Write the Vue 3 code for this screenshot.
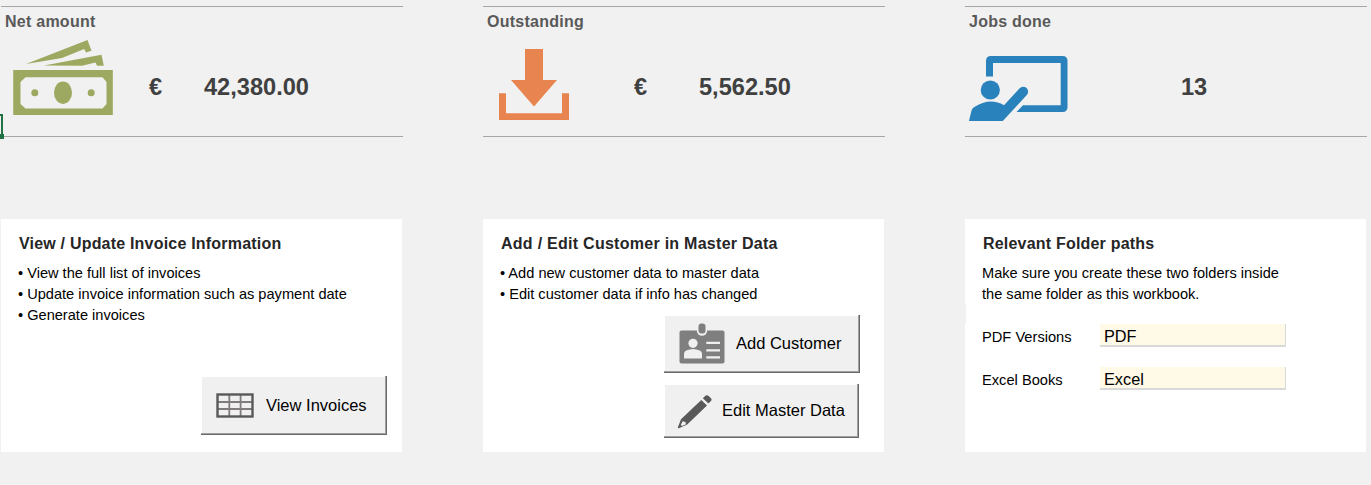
<script setup>
const columns = [
  { id: 'net', label: 'Net amount', currency: '€', value: '42,380.00' },
  { id: 'due', label: 'Outstanding', currency: '€', value: '5,562.50' },
  { id: 'jobs', label: 'Jobs done', currency: '', value: '13' },
]
const folders = [
  { label: 'PDF Versions', value: 'PDF' },
  { label: 'Excel Books', value: 'Excel' },
]
</script>

<template>
  <main class="sheet">
    <span class="cell-cursor"></span>
    <section class="row kpis">
      <article v-for="c in columns" :key="c.id" class="kpi" :class="c.id">
        <h2>{{ c.label }}</h2>
        <div class="figure">
          <svg v-if="c.id === 'net'" class="pic" width="120" height="96" viewBox="0 0 120 96">
            <g fill="#9da960">
              <path d="M25 33 L86.5 9 L90.5 19.7 L85 21.5 L83.2 18 L61 27 Z" />
              <path d="M43 34.5 L100.5 23.7 L102.8 34.8 H96 L94.5 31.5 L81 34.8 Z" />
              <path fill-rule="evenodd" d="M12.2 39 H111.8 V84 H12.2 Z M24.5 46.2 L19.5 51 V73 L24.5 77.6 H101.5 L105.5 73 V51 L101.5 46.2 Z" />
              <ellipse cx="62" cy="61.7" rx="9" ry="11.2" />
              <circle cx="33.8" cy="61.8" r="3.5" />
              <circle cx="90.2" cy="61.8" r="3.5" />
            </g>
          </svg>
          <svg v-else-if="c.id === 'due'" class="pic" width="120" height="96" viewBox="0 0 120 96">
            <g fill="#e8844f">
              <path d="M42 18 H60 V49 H74 L51 75.5 L28 49 H42 Z" />
              <path d="M16 62.3 H23 V82.3 H79 V62.3 H86 V89 H16 Z" />
            </g>
          </svg>
          <svg v-else class="pic" width="120" height="96" viewBox="0 0 120 96">
            <g fill="#2982bb">
              <path d="M21 45.5 V30 Q21 25 26 25 H97.5 Q102.5 25 102.5 30 V76 Q102.5 81 97.5 81 H51.5 L58 74.2 H95.7 V32 H28 V45.5 Z" />
              <circle cx="25.3" cy="59" r="9.6" />
              <path d="M4 90 L6.5 79.5 Q7 77.5 9 76.2 Q25 66 39 74.3 L54.6 57.3 A4.8 4.8 0 0 1 61.8 64 L37.8 90 Z" />
            </g>
          </svg>
          <span class="currency">{{ c.currency }}</span>
          <span class="value">{{ c.value }}</span>
        </div>
      </article>
    </section>

    <section class="row cards">
      <article class="card">
        <h3>View / Update Invoice Information</h3>
        <p>• View the full list of invoices</p>
        <p>• Update invoice information such as payment date</p>
        <p>• Generate invoices</p>
        <button class="view">
          <svg width="38" height="25" viewBox="0 0 38 25">
            <path fill="none" stroke="#807c7e" stroke-width="1.8" d="M2 9 H36 M2 16 H36 M13.3 2 V23 M24.6 2 V23" />
            <rect x="1.5" y="1.5" width="35" height="22" fill="none" stroke="#595959" stroke-width="2.4" />
          </svg>
          <span>View Invoices</span>
        </button>
      </article>

      <article class="card customers">
        <h3>Add / Edit Customer in Master Data</h3>
        <p>• Add new customer data to master data</p>
        <p>• Edit customer data if info has changed</p>
        <button class="add">
          <svg width="46" height="41" viewBox="0 0 46 41">
            <rect x=".5" y="7.5" width="45" height="33" rx="2" fill="#7f7f7f" />
            <path fill="#f0f0f0" d="M17.8 6 H28.2 V7.5 A5.2 5.2 0 0 1 17.8 7.5 Z" />
            <rect x="19.5" y=".5" width="7" height="10" rx="3" fill="#7f7f7f" />
            <g fill="#f0f0f0">
              <circle cx="14" cy="20.3" r="4.6" />
              <path d="M5 35.5 V30.5 Q5 28.8 7.3 27.6 Q14 24.5 20.7 27.6 Q23 28.8 23 30.5 V35.5 Z" />
              <path d="M27.3 18.7 H41 V21 H27.3 Z M27.3 26.2 H41 V28.4 H27.3 Z M27.3 33.2 H41 V35.5 H27.3 Z" />
            </g>
          </svg>
          <span>Add Customer</span>
        </button>
        <button class="edit">
          <svg width="36" height="36" viewBox="0 0 36 36">
            <g fill="#595959">
              <path d="M25.8 5.3 L28.7 2.6 Q30 1.6 31.4 2.8 L34 5.3 Q35.2 6.6 34.2 7.8 L31.4 10.6 Z" />
              <path fill-rule="evenodd" d="M24.3 6.9 L30 12.4 L10.2 31.5 L1.8 35.2 Q.6 35.5 .9 34.3 L4 26.2 Z M5.6 28.3 L3.8 32 L5 33 L8.9 31.3 L8.5 28.9 Z" />
            </g>
          </svg>
          <span>Edit Master Data</span>
        </button>
      </article>

      <article class="card notched">
        <h3>Relevant Folder paths</h3>
        <p>Make sure you create these two folders inside</p>
        <p>the same folder as this workbook.</p>
        <div class="folders">
          <div v-for="f in folders" :key="f.label" class="folder">
            <span class="name">{{ f.label }}</span>
            <span class="path">{{ f.value }}</span>
          </div>
        </div>
      </article>
    </section>
  </main>
</template>

<style>
body {
  background: #f1f1f1;
}
</style>

<style scoped>
.sheet {
  box-sizing: border-box;
  position: relative;
  width: 1371px;
  height: 485px;
  padding: 6px 0 0 1px;
  overflow: hidden;
  background: #f1f1f1;
  font-family: "Liberation Sans", Arial, sans-serif;
}
.cell-cursor {
  position: absolute;
  left: 0;
  top: 114px;
  width: 1px;
  height: 20px;
  border: solid #217346;
  border-width: 2px 2px 0 0;
}
.cell-cursor::after {
  content: "";
  position: absolute;
  left: 0;
  top: 18px;
  width: 4px;
  height: 5px;
  background: #217346;
}
.row {
  display: grid;
  grid-template-columns: repeat(3, 402px);
  column-gap: 80px;
}
.kpi {
  box-sizing: border-box;
  height: 131px;
  border: solid #a6a6a6;
  border-width: 1px 0;
}
.kpi h2 {
  margin: 0;
  padding: 5px 0 0 4px;
  font-size: 16px;
  line-height: 20px;
  letter-spacing: 0.25px;
  color: #595959;
}
.figure {
  display: flex;
  height: 96px;
}
.pic {
  flex: none;
  margin-top: -1px;
}
.currency {
  width: 83px;
  padding-left: 28px;
  box-sizing: border-box;
}
.due .currency {
  width: 96px;
  padding-left: 31px;
}
.jobs .currency {
  width: 96px;
}
.value,
.currency {
  padding-top: 41px;
  font-size: 23.6px;
  line-height: 28px;
  font-weight: bold;
  color: #404040;
}
.cards {
  margin-top: 82px;
}
.card {
  box-sizing: border-box;
  position: relative;
  display: flex;
  flex-direction: column;
  width: 401px;
  height: 233px;
  padding: 15px 0 0 17px;
  background: #fff;
}
.card h3 {
  margin: 0 0 9px 1px;
  font-size: 16px;
  line-height: 20px;
  letter-spacing: 0.2px;
  color: #262626;
}
.customers h3 {
  letter-spacing: 0.27px;
}
.card p {
  margin: 0;
  font-size: 14.6px;
  line-height: 21px;
  color: #000;
}
button {
  box-sizing: border-box;
  display: flex;
  align-items: center;
  border: 0;
  padding: 0;
  background: #f0f0f0;
  box-shadow: inset -1px -1px #696969, inset -2px -2px #a0a0a0, inset 1px 1px #fff;
  font: 16.5px "Liberation Sans", Arial, sans-serif;
  color: #000;
}
.view {
  width: 186px;
  height: 59px;
  margin: 50px 0 0 183px;
  padding-left: 15px;
  gap: 12px;
}
.add {
  width: 196px;
  height: 58px;
  margin: 10px 0 0 164px;
  padding: 0 0 2px 15px;
  gap: 11px;
}
.edit {
  width: 195px;
  height: 54px;
  margin: 11px 0 0 164px;
  padding: 0 0 1px 13px;
  gap: 9px;
}
.notched::before {
  content: "";
  position: absolute;
  left: 0;
  top: 84px;
  width: 1px;
  height: 21px;
  background: #f1f1f1;
}
.folders {
  display: grid;
  row-gap: 20px;
  margin-top: 19px;
}
.folder {
  display: flex;
}
.name {
  width: 118px;
  padding-top: 3px;
  font-size: 14.67px;
  line-height: 20px;
}
.path {
  box-sizing: border-box;
  width: 186px;
  height: 23px;
  padding-left: 4px;
  border: solid #d9d9d9;
  border-width: 0 1px 2px 0;
  background: #fff9e7;
  font-size: 16.3px;
  line-height: 25px;
}
</style>
